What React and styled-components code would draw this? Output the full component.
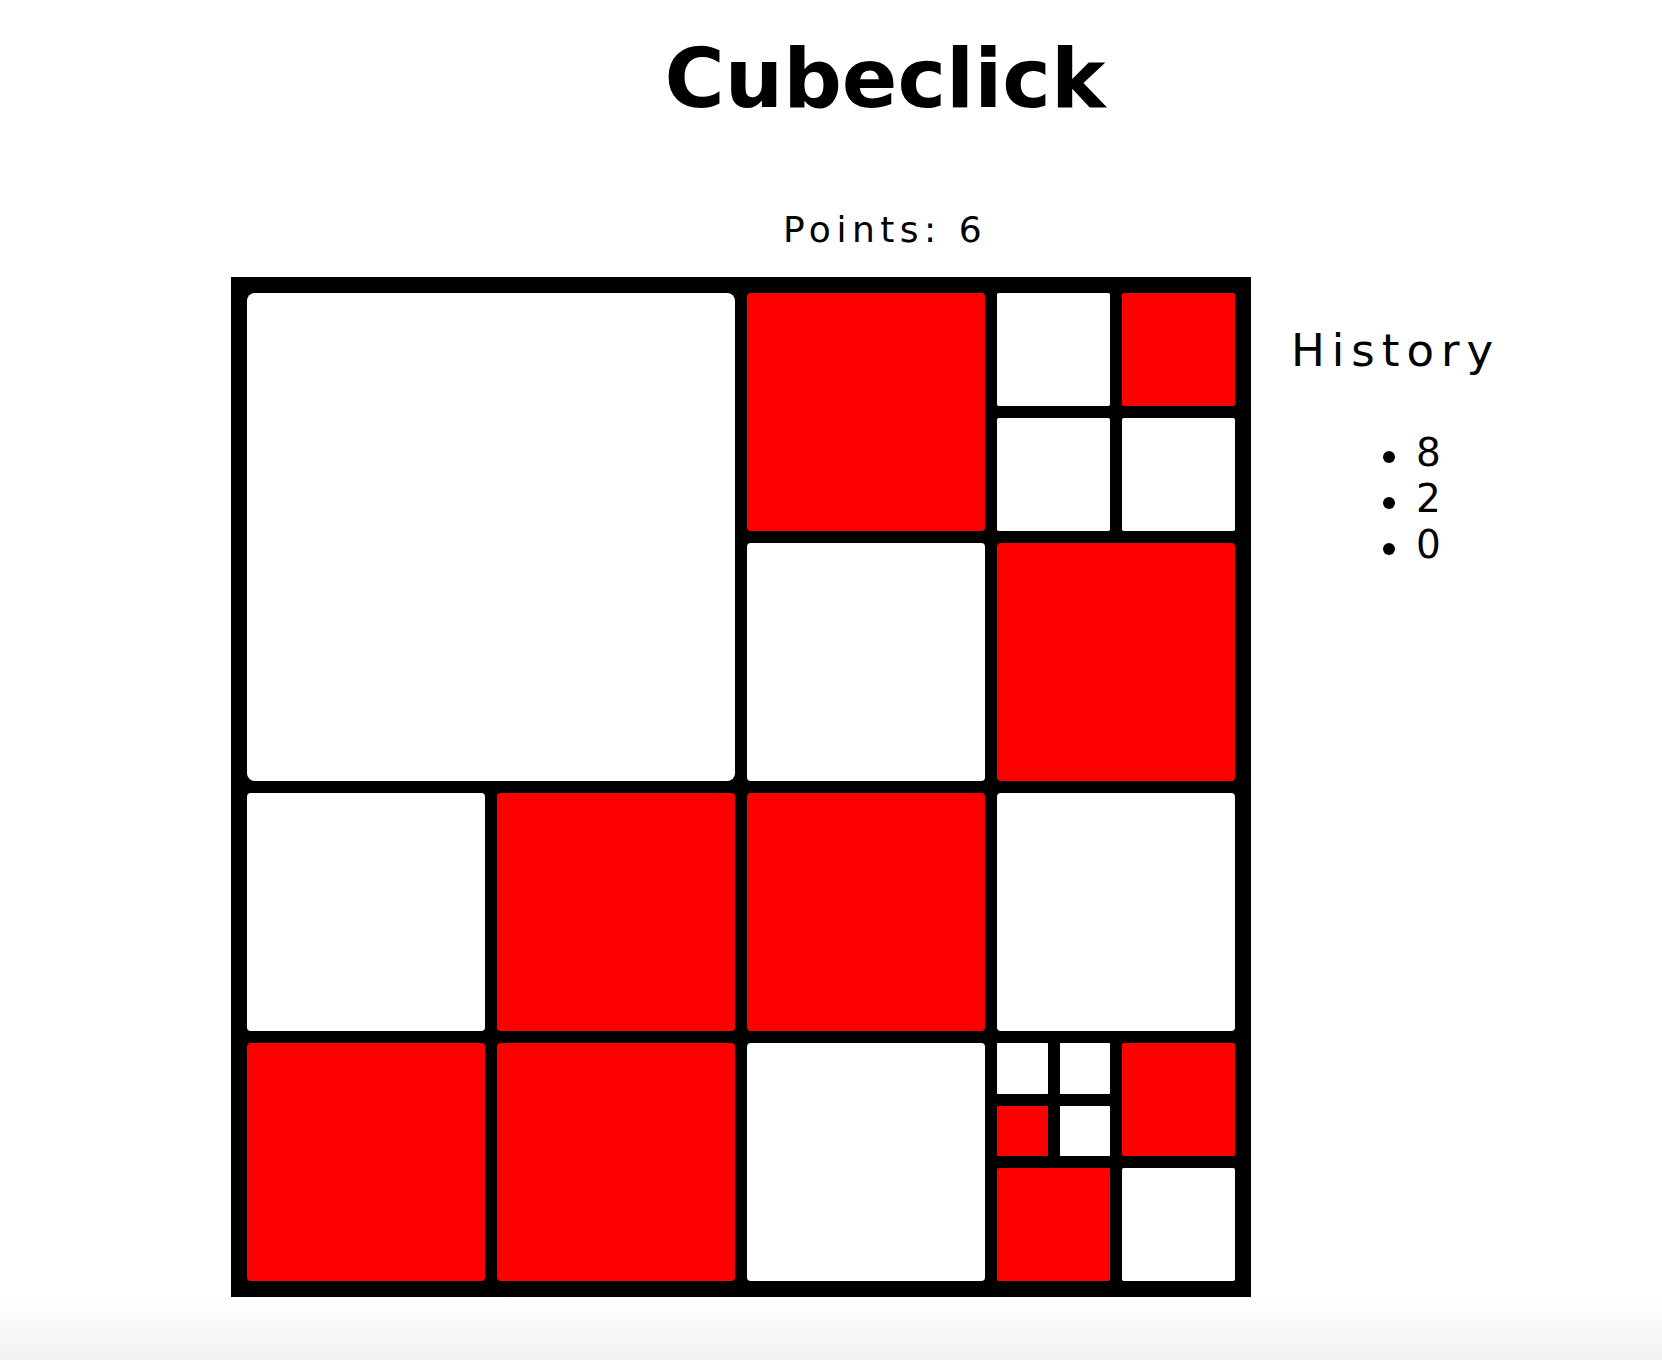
import React from "react";
import styled, { createGlobalStyle } from "styled-components";

const GlobalStyle = createGlobalStyle`
  html, body {
    margin: 0;
    padding: 0;
  }

  body {
    font-family: "DejaVu Sans", "Liberation Sans", sans-serif;
    color: #000;
    background: #fff;
  }
`;

// w = white, r = red, arrays = split into four (TL, TR, BL, BR)
const board = [
  "w",
  ["r", ["w", "r", "w", "w"], "w", "r"],
  ["w", "r", "r", "r"],
  ["r", "w", "w", [["w", "w", "r", "w"], "r", "r", "w"]],
];

const history = [8, 2, 0];

const Page = styled.div`
  min-height: 100vh;
  background: linear-gradient(
    to bottom,
    #fff calc(100% - 62px),
    #f2f2f2 100%
  );
`;

const Header = styled.header`
  padding-left: 108px;
  padding-top: 31px;
  text-align: center;
`;

const Title = styled.h1`
  margin: 0;
  font-size: 82px;
  font-weight: bold;
  line-height: normal;
`;

const Points = styled.p`
  margin: 83px 0 0;
  font-size: 36px;
  letter-spacing: 5.5px;
  line-height: normal;
`;

const Game = styled.main`
  display: flex;
  align-items: flex-start;
  gap: 40px;
  margin-top: 27px;
  padding-left: 231px;
`;

const Board = styled.div`
  box-sizing: border-box;
  width: 1020px;
  height: 1020px;
  padding: 10px;
  background: #000;
  flex-shrink: 0;
`;

const Quad = styled.div`
  display: grid;
  grid-template-columns: minmax(0, 1fr) minmax(0, 1fr);
  grid-template-rows: minmax(0, 1fr) minmax(0, 1fr);
  width: 100%;
  height: 100%;
  min-width: 0;
  min-height: 0;
`;

const Cell = styled.button`
  margin: 6px;
  padding: 0;
  border: none;
  border-radius: 1.6%;
  background: ${(p) => (p.$red ? "#ff0000" : "#fff")};
  cursor: pointer;
`;

const History = styled.aside`
  margin-top: 47px;
`;

const HistoryTitle = styled.h2`
  margin: 0;
  font-size: 45px;
  font-weight: normal;
  letter-spacing: 7px;
  line-height: normal;
`;

const HistoryList = styled.ul`
  list-style: none;
  margin: 53px 0 0;
  padding: 0 0 0 92px;
`;

const HistoryItem = styled.li`
  display: flex;
  align-items: center;
  font-size: 39px;
  line-height: 46px;

  &::before {
    content: "";
    width: 12px;
    height: 12px;
    margin-right: 21px;
    margin-top: 8px;
    border-radius: 50%;
    background: #000;
  }
`;

const Node = ({ node }) => {
  if (typeof node === "string") {
    return <Cell $red={node === "r"} />;
  }
  return (
    <Quad>
      {node.map((child, i) => (
        <Node key={i} node={child} />
      ))}
    </Quad>
  );
};

const App = () => {
  return (
    <Page>
      <GlobalStyle />
      <Header>
        <Title>Cubeclick</Title>
        <Points>Points: 6</Points>
      </Header>
      <Game>
        <Board>
          <Node node={board} />
        </Board>
        <History>
          <HistoryTitle>History</HistoryTitle>
          <HistoryList>
            {history.map((h, i) => (
              <HistoryItem key={i}>{h}</HistoryItem>
            ))}
          </HistoryList>
        </History>
      </Game>
    </Page>
  );
};

export default App;
